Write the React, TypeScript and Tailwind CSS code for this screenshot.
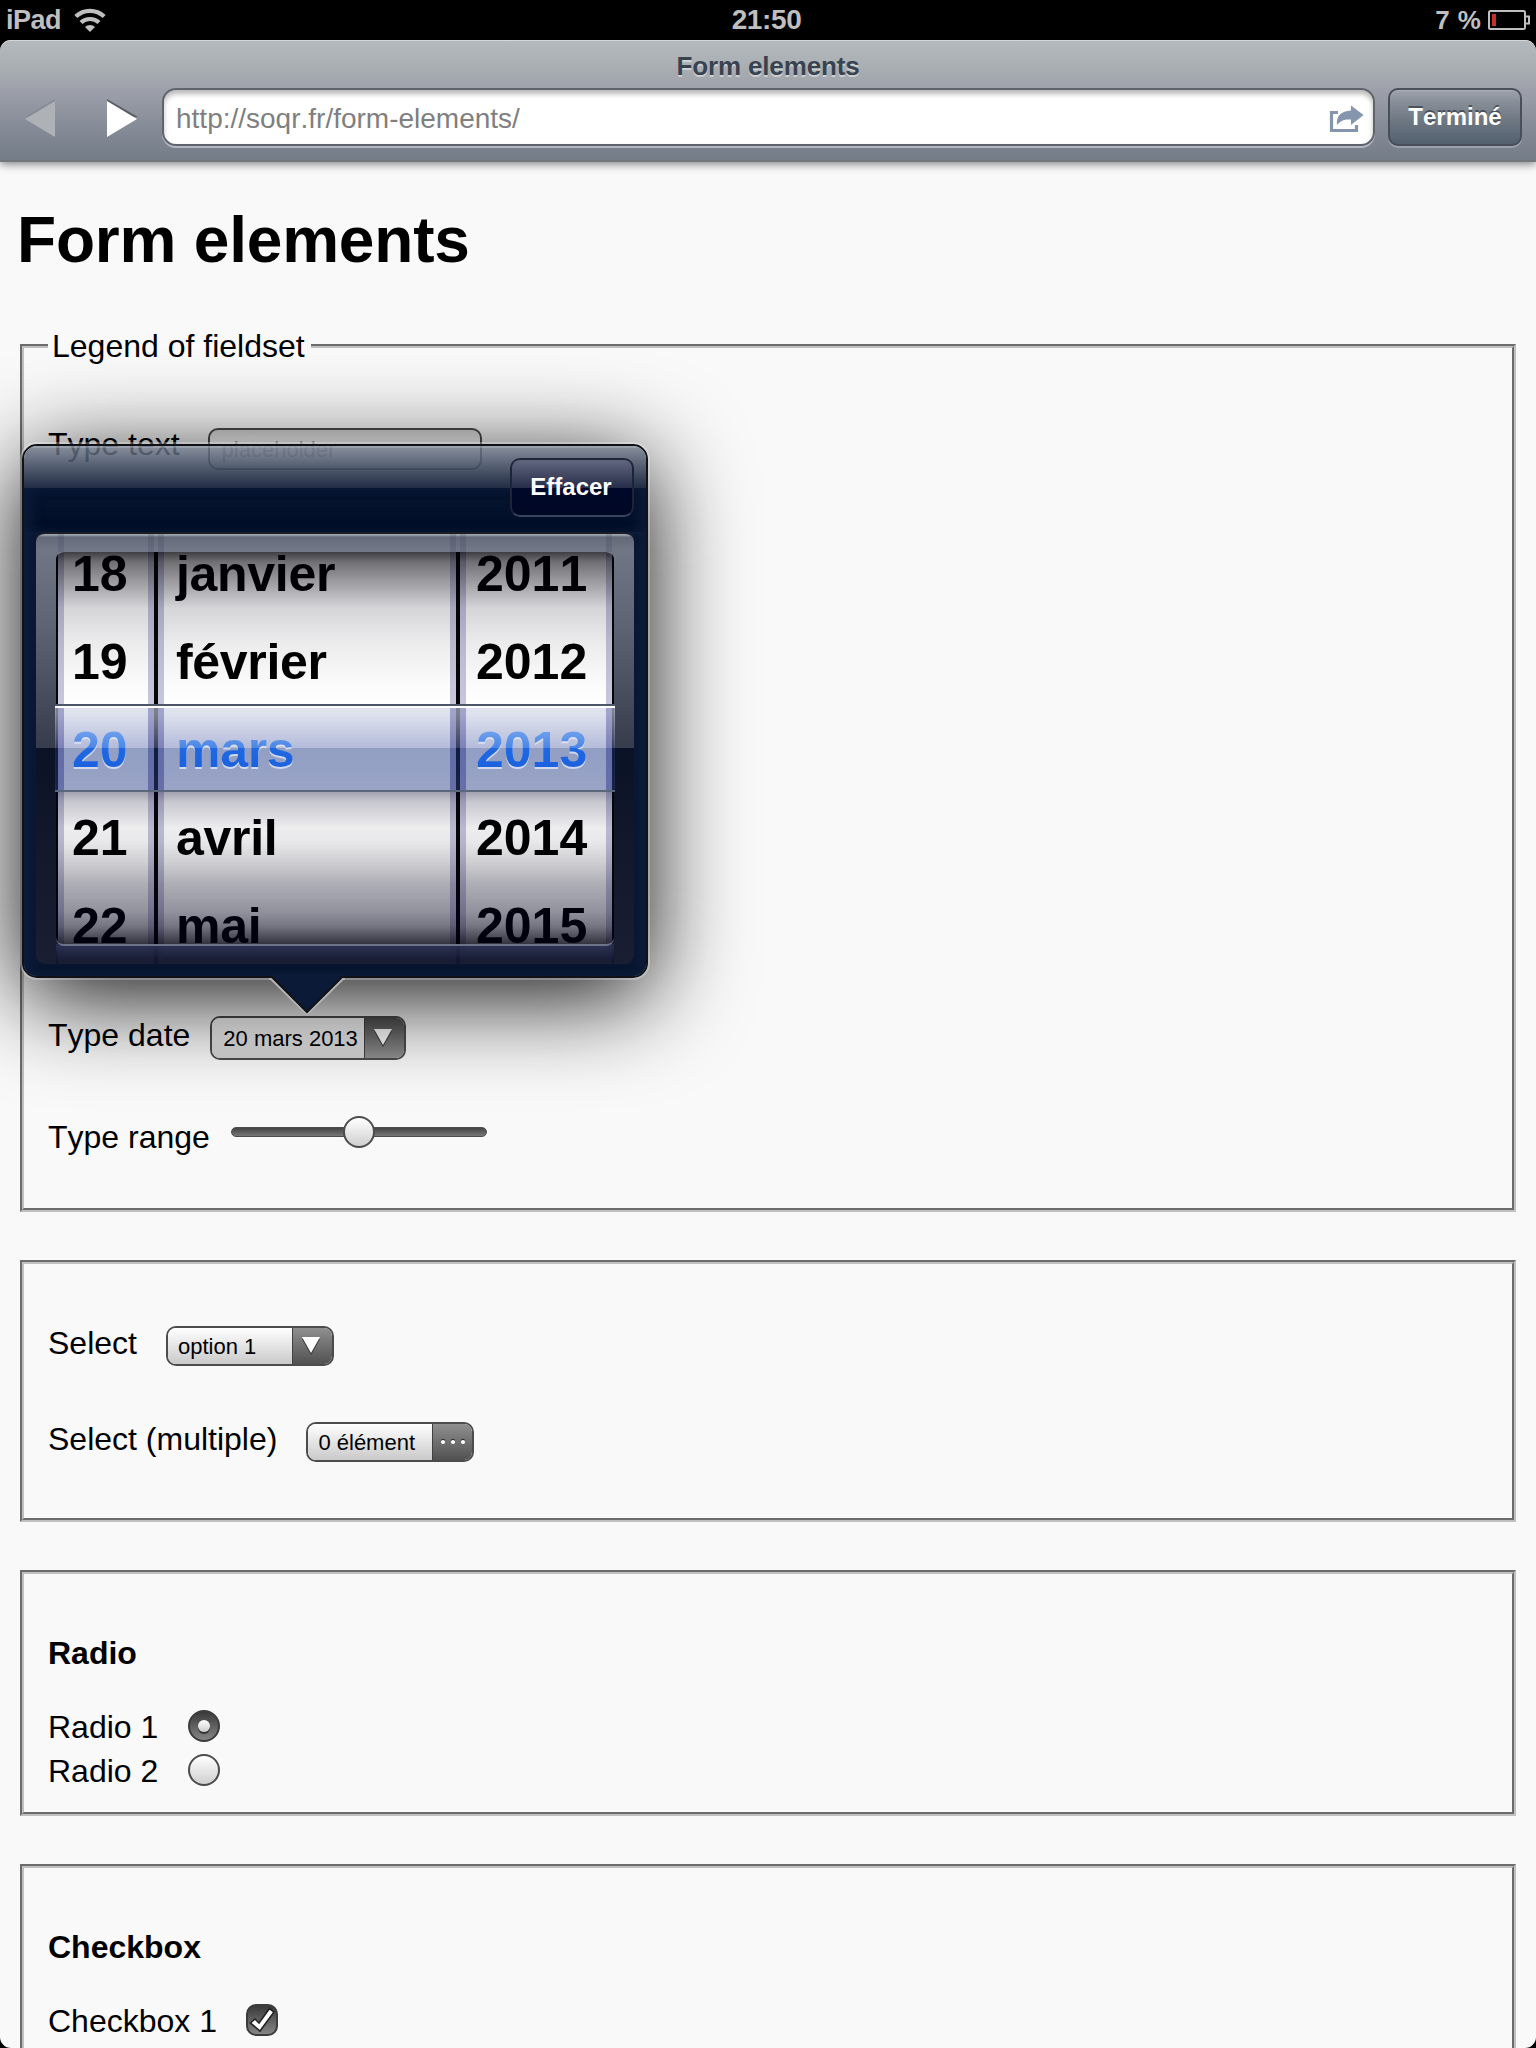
import React from "react";

const days = ["18", "19", "20", "21", "22"];
const months = ["janvier", "février", "mars", "avril", "mai"];
const years = ["2011", "2012", "2013", "2014", "2015"];

function StatusBar() {
  return (
    <div className="flex h-10 items-center justify-between bg-black pl-[6px] pr-[5px] font-bold text-[#bfbfbf]">
      <div className="flex flex-1 items-center">
        <span className="text-[27px] leading-[38px] tracking-[-0.5px]">iPad</span>
        <svg className="ml-[13px]" width="32" height="24" viewBox="0 0 32 24">
          <g fill="none" stroke="#bfbfbf" strokeWidth="4.2">
            <path d="M1.8 8.6 A20.5 20.5 0 0 1 30.2 8.6" />
            <path d="M7 14.6 A13 13 0 0 1 25 14.6" />
          </g>
          <path d="M11 19 A7.4 7.4 0 0 1 21 19 L16 24 Z" fill="#bfbfbf" />
        </svg>
      </div>
      <span className="-ml-[4px] text-[28px] leading-[38px] tracking-[-0.4px]">21:50</span>
      <div className="flex flex-1 items-center justify-end">
        <span className="mr-[7px] text-[26px] leading-[38px] [word-spacing:1px]">7 %</span>
        <svg width="43" height="20" viewBox="0 0 43 20">
          <rect x="1" y="1" width="36" height="18" rx="1.5" fill="none" stroke="#bfbfbf" strokeWidth="2" />
          <path d="M38 6.5 H41 V13.5 H38" fill="none" stroke="#bfbfbf" strokeWidth="2" />
          <rect x="4" y="4" width="4" height="12" fill="#c4302b" />
        </svg>
      </div>
    </div>
  );
}

function Toolbar() {
  return (
    <div className="bg-black">
      <header className="relative z-10 h-[120px] rounded-t-[11px] bg-[linear-gradient(180deg,#b3b9bd_0%,#aaafb3_22%,#a1a4ad_36%,#9095a0_58%,#737c87_100%)] shadow-[inset_0_1px_0_#d2d6d8,0_2px_0_#74777a,0_4px_10px_rgba(0,0,0,0.5)]">
        <div className="h-12 pt-[7px] text-center text-[26px] leading-[38px] font-bold tracking-[-0.15px] text-[#38434f] [text-shadow:0_2px_0_rgba(255,255,255,0.45)]">
          Form elements
        </div>
        <div className="flex pl-[24px] pr-[14px]">
          <svg className="mt-[11px] shrink-0" width="114" height="40" viewBox="0 0 114 40">
            <path d="M31 0 L1 18 L31 18Z" fill="#858b93" />
            <path d="M31 2 L1 20 L31 38Z" fill="#aeb2b6" />
            <path d="M83 0 L114 18 L83 18Z" fill="#5a5f66" />
            <path d="M83 2 L113 20 L83 38Z" fill="#fff" />
          </svg>
          <div className="ml-[24px] flex h-[58px] w-[1213px] items-center justify-between rounded-[14px] border-2 border-[#5f636c] bg-white pr-[9px] pl-[12px] shadow-[inset_0_4px_5px_rgba(0,0,0,0.28),0_2px_0_rgba(220,220,235,0.6)]">
            <span className="pt-[3px] text-[28px] leading-[50px] text-[#7f7f7f]">http://soqr.fr/form-elements/</span>
            <svg className="mt-[3px]" width="35" height="28" viewBox="0 0 35 28">
              <path d="M9 7.5 H2.5 V25.5 H27.5 V20" fill="none" stroke="#8595ae" strokeWidth="3.2" />
              <path d="M8 20 C7 11 12 6 22 5.5 V0.5 L34.500 10 L22 20 V14.500 C15 14 11 16 8 20 Z" fill="#8595ae" />
            </svg>
          </div>
          <button className="ml-[13px] h-[58px] w-[134px] rounded-[10px] border-2 border-[#484f59] bg-[linear-gradient(180deg,#9ea2ab_0%,#858c96_25%,#6b7681_60%,#52606f_100%)] pb-[1px] text-[24px] leading-[48px] font-bold text-white shadow-[inset_0_1px_1px_rgba(255,255,255,0.15),0_2px_0_rgba(220,220,235,0.35)] [text-shadow:0_-2px_0_rgba(40,46,56,0.6)]">
            Terminé
          </button>
        </div>
      </header>
    </div>
  );
}

function Fieldset({ className, children }: { className: string; children: React.ReactNode }) {
  return (
    <fieldset
      className={
        "mb-12 border-[4px] border-[#c0c0c0] [border-style:groove] px-6 text-[32px] leading-[44px] text-black " + className
      }
    >
      {children}
    </fieldset>
  );
}

function SelectBox({ label, pressed, dots, className }: { label: string; pressed?: boolean; dots?: boolean; className: string }) {
  return (
    <div className={"flex overflow-hidden rounded-[10px] border-2 border-[#4c4c4c] text-[22px] " + className}>
      <div
        className={
          "flex-1 whitespace-nowrap " +
          (pressed
            ? "bg-[linear-gradient(180deg,#ffffff,#d2d2d2)] pl-[11px]"
            : "bg-[linear-gradient(180deg,#ffffff,#c9c9c9)] pl-[10px]")
        }
      >
        {label}
      </div>
      <div
        className={
          "flex w-[40px] items-center justify-center border-l border-[#404040] " +
          (pressed ? "bg-[linear-gradient(180deg,#505050,#929292)]" : "bg-[linear-gradient(180deg,#8f8f8f,#515151)]")
        }
      >
        {dots ? (
          <svg width="26" height="8" viewBox="0 0 26 8">
            <g fill="#333">
              <circle cx="3" cy="3" r="2.2" />
              <circle cx="13" cy="3" r="2.2" />
              <circle cx="23" cy="3" r="2.2" />
            </g>
            <g fill="#fff">
              <circle cx="3" cy="4" r="2.1" />
              <circle cx="13" cy="4" r="2.1" />
              <circle cx="23" cy="4" r="2.1" />
            </g>
          </svg>
        ) : (
          <svg className="mr-[3px]" width="18" height="18" viewBox="0 0 18 18">
            <path d="M0 2 H18 L9 18Z" fill="#3a3a3a" />
            <path d="M0 0 H18 L9 16Z" fill="#fff" />
          </svg>
        )}
      </div>
    </div>
  );
}

function Wheel({ values, className, textClass }: { values: string[]; className: string; textClass: string }) {
  return (
    <div
      className={
        "h-full overflow-hidden border-x-[6px] border-[#c6c6de] bg-white text-[50px] leading-[88px] font-bold text-black " +
        className
      }
    >
      <div className="-mt-[22px]">
        {values.map((v, i) => (
          <div
            key={v}
            className={
              "h-[88px] " +
              textClass +
              (i === 2
                ? " relative z-10 bg-[linear-gradient(180deg,#8fb6f2_10px,#4a86e6_42px,#2068e2_42px,#1b60de_66px)] bg-clip-text text-transparent drop-shadow-[0_2px_0_rgba(225,231,248,0.8)]"
                : "")
            }
          >
            {v}
          </div>
        ))}
      </div>
    </div>
  );
}

function FrameStrip({ className }: { className: string }) {
  return (
    <div className={"flex px-[2px] " + className}>
      <div className="w-24 border-x-[6px] border-[#20204a]/15 bg-[#8f9ccc]/5" />
      <div className="ml-1 w-[298px] border-x-[6px] border-[#20204a]/15 bg-[#8f9ccc]/5" />
      <div className="ml-1 w-[152px] border-x-[6px] border-[#20204a]/15 bg-[#8f9ccc]/5" />
    </div>
  );
}

function DatePopover() {
  return (
    <div className="absolute top-[444px] left-[22px] h-[534px] w-[626px] rounded-[15px] shadow-[0_0_0_2px_rgba(255,255,255,0.28),0_18px_96px_rgba(0,0,0,0.95)]">
      <div className="flex h-full flex-col overflow-hidden rounded-[15px] border-2 border-[#101216]">
        <div className="h-[42px] shrink-0 bg-[linear-gradient(180deg,rgba(112,121,138,0.82)_0%,rgba(66,77,97,0.91)_50%,rgba(26,38,62,0.97)_100%)] shadow-[inset_0_2px_0_rgba(200,205,215,0.3)]" />
        <div className="h-[44px] shrink-0 bg-[linear-gradient(180deg,#07152f,#000d26)] shadow-[inset_10px_0_12px_-2px_#0b1a37,inset_-10px_0_12px_-2px_#0b1a37]" />
        <div className="flex-1 bg-[#081630] px-3 shadow-[inset_8px_0_10px_#0c1c3a,inset_-8px_0_10px_#0c1c3a]">
          <div className="h-[432px] rounded-[9px] border-t-2 border-[#1a1d24] bg-[linear-gradient(180deg,#a0a3ab_0px,#a0a3ab_1px,#646977_3px,#717685_16px,#5e6473_90px,#363c4c_214px,#0c1225_214px,#1a1e32_430px)] px-5">
            <FrameStrip className="h-[18px]" />
            <div className="relative h-[392px] w-[558px] rounded-[8px]">
              <div className="flex h-full overflow-hidden rounded-[8px] bg-[#060606] px-[2px]">
                <Wheel values={days} className="w-24" textClass="pl-[8px]" />
                <Wheel values={months} className="ml-1 w-[298px] tracking-[-0.3px]" textClass="pl-[12px]" />
                <Wheel values={years} className="ml-1 w-[152px]" textClass="pl-[10px]" />
              </div>
              {/* Cylinder shading over the wheels */}
              <div className="absolute inset-x-0 top-0 -bottom-[2px] rounded-[8px] border-b-2 border-[#6d7388] bg-[linear-gradient(180deg,rgba(0,0,8,0.76)_0px,rgba(0,0,8,0.56)_10px,rgba(0,0,10,0.42)_26px,rgba(5,5,25,0.17)_56px,rgba(0,0,15,0.08)_90px,rgba(0,5,5,0.02)_130px,rgba(0,0,0,0)_152px,rgba(0,0,0,0)_238px,rgba(0,0,40,0.36)_240px,rgba(0,0,35,0.22)_250px,rgba(0,0,20,0.07)_276px,rgba(0,0,20,0.09)_290px,rgba(0,0,18,0.19)_310px,rgba(0,0,25,0.32)_332px,rgba(0,0,30,0.43)_360px,rgba(0,0,25,0.54)_374px,rgba(0,0,15,0.8)_392px)]" />
              {/* Selection band */}
              <div className="absolute top-[152px] -left-[1px] h-[88px] w-[560px] border-y-2 border-t-[#4d5767] border-b-[#5a677b] bg-[linear-gradient(180deg,#ffffff_0px,#ffffff_2px,rgba(205,210,228,0.6)_2px,rgba(200,206,226,0.6)_8px,rgba(105,120,180,0.5)_42px,rgba(26,54,128,0.48)_42px,rgba(42,64,135,0.48)_84px)]">
                <div className="flex h-full px-[3px] pt-[2px]">
                  <div className="w-24 border-x-[6px] border-[#2a2a88]/25" />
                  <div className="ml-1 w-[298px] border-x-[6px] border-[#2a2a88]/25" />
                  <div className="ml-1 w-[152px] border-x-[6px] border-[#2a2a88]/25" />
                </div>
              </div>
            </div>
            <FrameStrip className="h-5 bg-[linear-gradient(180deg,#272e4c_2px,#11162b_16px,#12182b_20px)]" />
          </div>
        </div>
      </div>
      <button className="absolute top-[14px] right-[14px] h-[59px] w-[124px] rounded-[10px] border-2 border-t-[#22283a] border-r-[#1d2438] border-b-[#3a435c] border-l-[#1d2438] bg-[linear-gradient(180deg,#626780_0px,#262d48_28px,#00082a_28px,#000825_100%)] pr-[2px] pb-[2px] text-[24px] leading-[52px] font-bold text-white">
        Effacer
      </button>
      <svg className="absolute top-[531px] left-[246px]" width="80" height="40" viewBox="0 0 80 40">
        <path d="M1 4 H3 L39 39.500 L75 4 H77" fill="none" stroke="#b4b4b4" strokeWidth="2" />
        <path d="M0 0 V2 H4 L39 37 L74 2 H80 V0Z" fill="#0b1a37" />
        <path d="M0 2 H4 L39 37 L74 2 H80" fill="none" stroke="#101216" strokeWidth="2" />
      </svg>
    </div>
  );
}

export default function App() {
  return (
    <div className="h-[2048px] w-[1536px] overflow-hidden bg-black [font-family:'Liberation_Sans',Arial,sans-serif] [font-kerning:none]">
      <div className="relative h-full overflow-hidden rounded-b-[11px] bg-[#f9f9f9]">
        <StatusBar />
        <Toolbar />
        <main className="px-5">
          <h1 className="-ml-[3px] pt-[43px] text-[64px] leading-[74px] font-bold tracking-[-0.2px] text-black">
            Form elements
          </h1>

          <Fieldset className="mt-[47px] h-[888px]">
            <legend className="pt-px pr-[6px] pl-1 leading-[43px]">Legend of fieldset</legend>
            <div className="flex pt-[54px]">
              <span>Type text</span>
              <div className="mt-[6px] ml-[28px] h-[42px] w-[274px] rounded-[10px] border-2 border-[#4c4c4c] bg-[linear-gradient(180deg,#d4d4d4,#ffffff_30%)] pl-[12px] text-[22px] leading-[40px] text-[#a9a9a9]">
                placeholder
              </div>
            </div>
            <div className="mt-[543px] flex">
              <span>Type date</span>
              <SelectBox label="20 mars 2013" pressed className="mt-[3px] ml-[20px] h-[44px] w-[196px] leading-[42px]" />
            </div>
            <div className="mt-[55px] flex">
              <span>Type range</span>
              <div className="mt-[12px] ml-[21px] flex h-[10px] w-[256px] items-center justify-center rounded-full border border-[#4c4c4c] bg-[linear-gradient(180deg,#444,#777)]">
                <div className="h-8 w-8 shrink-0 rounded-full border-2 border-[#4c4c4c] bg-[linear-gradient(180deg,#fff,#cfcfcf)]" />
              </div>
            </div>
          </Fieldset>

          <Fieldset className="h-[262px] pt-[57px]">
            <div className="flex">
              <span>Select</span>
              <SelectBox label="option 1" className="mt-[5px] ml-[29px] h-10 w-[168px] leading-[38px]" />
            </div>
            <div className="mt-[51px] flex">
              <span>Select (multiple)</span>
              <SelectBox label="0 élément" dots className="mt-[5px] ml-[29px] h-10 w-[168px] leading-[38px]" />
            </div>
          </Fieldset>

          <Fieldset className="h-[246px] pt-[57px]">
            <h2 className="font-bold">Radio</h2>
            <div className="mt-[30px] flex">
              <span className="w-[140px]">Radio 1</span>
              <div className="mt-[5px] flex h-8 w-8 items-center justify-center rounded-full border-2 border-[#3c3c3c] bg-[linear-gradient(180deg,#3a3a3a,#858585)]">
                <div className="h-3 w-3 rounded-full bg-[linear-gradient(180deg,#fff,#ccc)] shadow-[0_2px_0_#333]" />
              </div>
            </div>
            <div className="flex">
              <span className="w-[140px]">Radio 2</span>
              <div className="mt-[5px] h-8 w-8 rounded-full border-2 border-[#4c4c4c] bg-[linear-gradient(180deg,#fff,#cfcfcf)]" />
            </div>
          </Fieldset>

          <Fieldset className="h-[246px] pt-[57px]">
            <h2 className="font-bold">Checkbox</h2>
            <div className="mt-[30px] flex">
              <span className="w-[198px]">Checkbox 1</span>
              <div className="mt-[5px] h-8 w-8 rounded-[10px] border-2 border-[#3c3c3c] bg-[linear-gradient(180deg,#3a3a3a,#858585)]">
                <svg width="28" height="28" viewBox="0 0 28 28">
                  <path d="M2.500 17 L7 13 L11 17 L21.500 2.500 L26 6 L12 25 Z" fill="#fff" stroke="#222" strokeWidth="1.6" />
                </svg>
              </div>
            </div>
          </Fieldset>
        </main>
        <DatePopover />
      </div>
    </div>
  );
}
